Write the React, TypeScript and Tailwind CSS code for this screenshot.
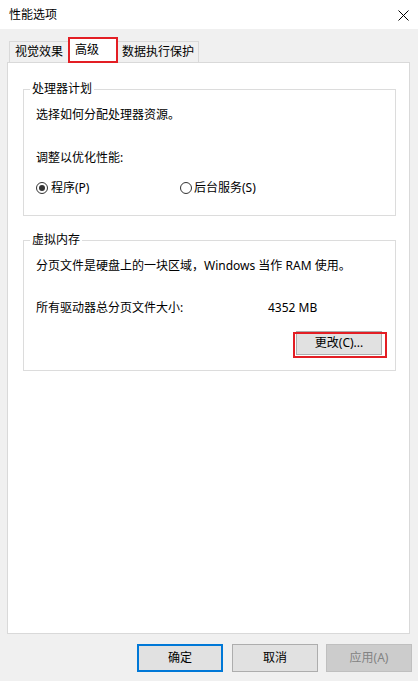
import React from "react";

const font = { fontFamily: '"Noto Sans", "Noto Sans CJK SC", sans-serif' };

function Radio({ checked }: { checked?: boolean }) {
  return (
    <span className="w-[12px] h-[12px] rounded-full border border-[#333333] flex items-center justify-center bg-white shrink-0">
      {checked && <span className="w-[6px] h-[6px] rounded-full bg-[#333333]" />}
    </span>
  );
}

export default function App() {
  return (
    <div
      className="w-[418px] h-[681px] bg-[#f0f0f0] text-black text-[12px] leading-[16px] flex flex-col overflow-hidden"
      style={font}
    >
      {/* title bar */}
      <div className="h-[29px] bg-white flex items-center justify-between pl-[9px] shrink-0">
        <span className="leading-[16px]">性能选项</span>
        <svg className="mr-[9px] mt-[1px]" width="11" height="11" viewBox="0 0 11 11">
          <path d="M0.5 0.5 L10.5 10.5 M10.5 0.5 L0.5 10.5" stroke="#000" strokeWidth="1" fill="none" />
        </svg>
      </div>

      {/* tabs */}
      <div className="h-[25px] mt-[8px] flex items-end pl-[9px] shrink-0">
        <div className="w-[60px] h-[21px] border border-b-0 border-[#d9d9d9] bg-[#f0f0f0] flex items-center justify-center">
          视觉效果
        </div>
        <div className="relative z-10 -ml-[1px] -mb-[1px] w-[50px] h-[26px] border-2 border-[#e31e24] bg-white flex items-center pl-[5px]">
          高级
        </div>
        <div className="w-[81px] h-[21px] border border-b-0 border-l-0 border-[#d9d9d9] bg-[#f0f0f0] flex items-center justify-center">
          数据执行保护
        </div>
      </div>

      {/* panel */}
      <div className="ml-[7px] w-[403px] h-[572px] border border-[#d9d9d9] bg-white flex flex-col shrink-0">
        {/* group 1 */}
        <div className="relative mt-[26px] ml-[15px] mr-[13px] border border-[#dcdcdc] pt-[17px] pl-[12px] pb-[19px]">
          <span className="absolute -top-[9px] left-[6px] bg-white px-[2px]">处理器计划</span>
          <div>选择如何分配处理器资源。</div>
          <div className="mt-[27px]">调整以优化性能:</div>
          <div className="mt-[14px] flex items-center h-[16px]">
            <div className="w-[144px] flex items-center gap-[3px]">
              <Radio checked />
              <span>程序(P)</span>
            </div>
            <div className="flex items-center gap-[2px]">
              <Radio />
              <span>后台服务(S)</span>
            </div>
          </div>
        </div>

        {/* group 2 */}
        <div className="relative mt-[24px] ml-[15px] mr-[13px] border border-[#dcdcdc] pt-[17px] pl-[12px] pr-[13px] pb-[15px]">
          <span className="absolute -top-[9px] left-[6px] bg-white px-[2px]">虚拟内存</span>
          <div>分页文件是硬盘上的一块区域，Windows 当作 RAM 使用。</div>
          <div className="mt-[26px] flex">
            <span className="w-[232px]">所有驱动器总分页文件大小:</span>
            <span>4352 MB</span>
          </div>
          <div className="mt-[15px] flex justify-end">
            <div className="relative">
              <div className="w-[86px] h-[24px] border border-[#adadad] bg-[#e1e1e1] flex items-center justify-center">
                更改(C)...
              </div>
              <div className="absolute top-[1px] -left-[3px] w-[94px] h-[26px] border-2 border-[#e31e24]" />
            </div>
          </div>
        </div>
      </div>

      {/* bottom buttons */}
      <div className="mt-[10px] flex justify-end pr-[6px] shrink-0">
        <div className="w-[86px] h-[28px] border-2 border-[#0078d7] bg-[#e1e1e1] flex items-center justify-center">
          确定
        </div>
        <div className="ml-[9px] w-[86px] h-[28px] border border-[#adadad] bg-[#e1e1e1] flex items-center justify-center">
          取消
        </div>
        <div className="ml-[8px] w-[86px] h-[28px] border border-[#bfbfbf] bg-[#cccccc] text-[#838383] flex items-center justify-center">
          应用(A)
        </div>
      </div>
    </div>
  );
}
